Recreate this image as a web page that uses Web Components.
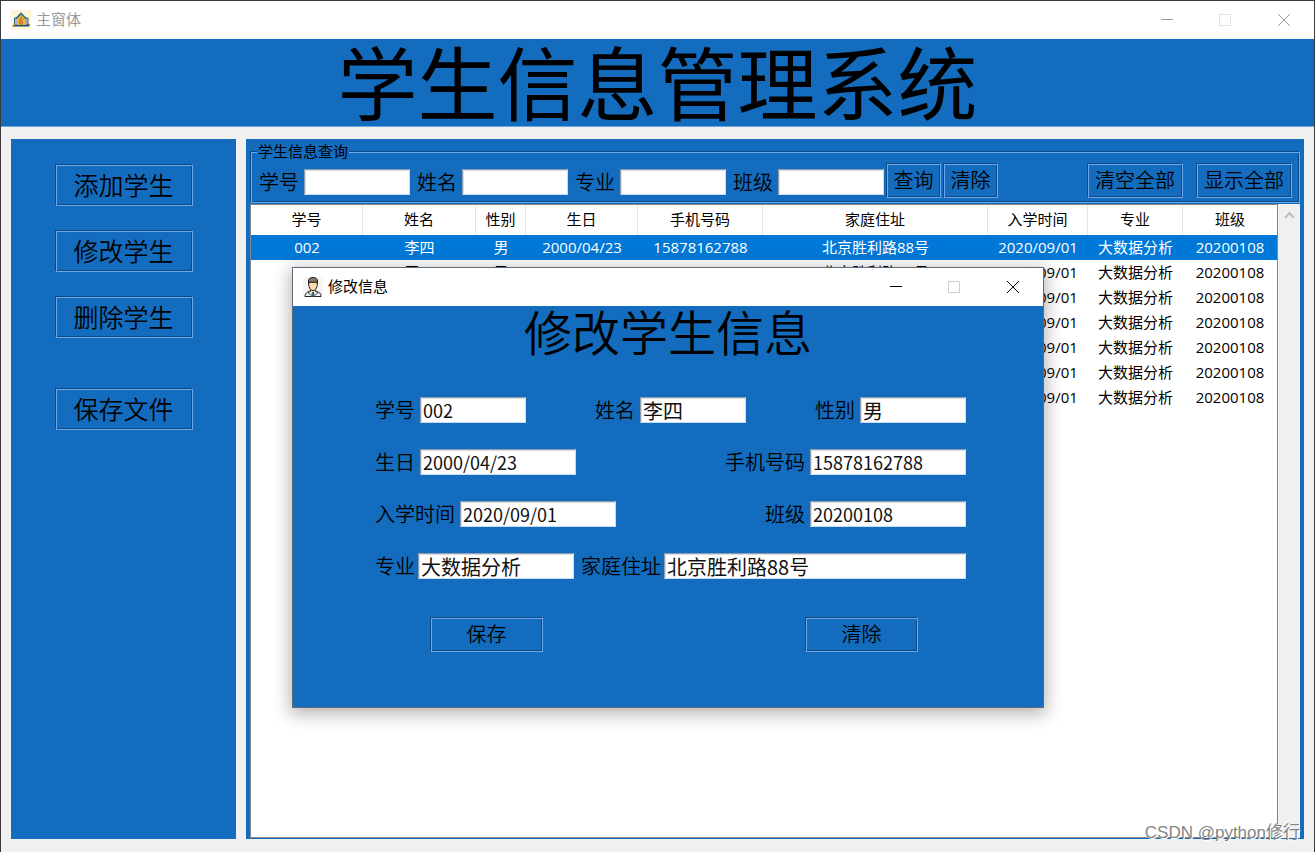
<!DOCTYPE html>
<html lang="zh-CN">
<head>
<meta charset="utf-8">
<title>主窗体</title>
<style>
  html, body { margin: 0; height: 100%; }
  body {
    --blue: #136cbe;
    --dark: #0c4a84;
    --light: #6ea6ea;
    --face: #f0f0f0;
    font-family: "Open Sans", "Noto Sans CJK SC", sans-serif;
    font-size: 15px;
    color: #000;
    background: var(--face);
  }
</style>
</head>
<body>
<main-window></main-window>

<script>
const define = (name, html, setup) => {
  const template = document.createElement('template');
  template.innerHTML = html;
  customElements.define(name, class extends HTMLElement {
    constructor() {
      super();
      this.attachShadow({ mode: 'open' }).append(template.content.cloneNode(true));
    }
    connectedCallback() { if (setup) setup(this, this.shadowRoot); }
  });
};

/* House logo of the main window */
define('house-icon', `
<style>:host { display: block; width: 20px; height: 20px; } svg { display: block; }</style>
<svg width="20" height="20" viewBox="0 0 20 20" aria-hidden="true">
  <rect width="20" height="20" fill="#fff6d8"/>
  <path d="M3.500 8h3v7h-3zM14 8h3v7h-3z" fill="#b9a9cf" stroke="#27698a"/>
  <path d="M6 15.500V7.500L10 3.500l4.500 4v8z" fill="#f4b63f"/>
  <path d="M5 8.500L10 3.500l5 5" fill="none" stroke="#1f7285" stroke-width="1.600"/>
  <path d="M8.500 15v-4h3v4M7.500 9h5M10 6v9" stroke="#b87a24" fill="none"/>
  <path d="M1 16.500l2-1.500h13l3-1-1 2.500z" fill="#1c5068"/>
  <circle cx="3" cy="14.500" r="1" fill="#f0a030"/>
</svg>`);

/* Portrait logo of the dialog */
define('person-icon', `
<style>:host { display: block; width: 20px; height: 20px; } svg { display: block; }</style>
<svg width="20" height="20" viewBox="0 0 20 20" aria-hidden="true">
  <rect width="20" height="20" fill="#f5f5f5"/>
  <path d="M2 19.500c0-4 3-4.500 6-6h4c3 1.500 6 2 6 6z" fill="#f4fafa" stroke="#222"/>
  <path d="M8 12h4v2l-2 2-2-2z" fill="#f3cfa0"/>
  <path d="M9 15h2l1 4.500H8z" fill="#4c6070"/>
  <path d="M5.500 5c0 5 1.500 8.500 4.500 8.500s4.500-3.500 4.500-8.500z" fill="#ffdcae" stroke="#222"/>
  <path d="M5.500 7V4c0-2.500 2-3.500 4.500-3.500s4.500 1 4.500 3.500v3l-1-2c-2 .500-5 .500-7 0z" fill="#8a7466" stroke="#222"/>
  <path d="M8 14l-3 2 3 2M12 14l3 2-3 2" fill="none" stroke="#333" stroke-width=".8"/>
</svg>`);

/* Title bar: icon and caption come in through slots */
define('title-bar', `
<style>
  :host { display: flex; align-items: center; height: 38px; flex: none; background: #fff; color: #000; --edge: #ccc; }
  :host([inactive]) { color: #999; --edge: #e4e4e4; }
  .caption { flex: 1; margin-left: 5px; padding-bottom: 2px; line-height: 20px; }
  ::slotted([slot=icon]) { margin-left: 10px; }
  button { width: 58px; height: 38px; padding: 0; border: 0; background: none; color: inherit; display: grid; place-items: center; }
  button:last-of-type { width: 60px; }
  button[disabled] { color: var(--edge); }
  svg { display: block; fill: none; stroke: currentColor; }
</style>
<slot name="icon"></slot>
<span class="caption"><slot></slot></span>
<button type="button" aria-label="最小化"><svg width="12" height="12"><path d="M0 5.500h12"/></svg></button>
<button type="button" aria-label="最大化" disabled><svg width="12" height="12"><path d="M.5 .5h11v11h-11z"/></svg></button>
<button type="button" aria-label="关闭"><svg width="12" height="12"><path d="M0 0l12 12M12 0l-12 12"/></svg></button>`);

define('groove-button', `
<style>
  :host { display: block; height: 35px; width: 113px; font-size: 20px; }
  :host([size=large]) { width: 138px; height: 42px; font-size: 25px; }
  :host([size=small]) { width: 55px; }
  :host([size=medium]) { width: 96px; }
  button {
    box-sizing: border-box; width: 100%; height: 100%; padding: 0; display: grid; place-items: center;
    font: inherit; font-weight: 350; line-height: 30px; white-space: nowrap; color: #000; background: var(--blue);
    border: 1px solid; border-color: var(--dark) var(--light) var(--light) var(--dark);
    box-shadow: inset 1px 1px var(--light), inset -1px -1px var(--dark);
  }
</style>
<button type="button"><slot></slot></button>`);

define('text-field', `
<style>
  :host { display: flex; align-items: center; gap: 5px; font-size: 20px; --field: 106px; }
  :host([size=wide]) { --field: 156px; }
  :host([size=fill]) { flex: 1; }
  :host([size=fill]) input { flex: 1; min-width: 0; }
  :host([tight]) { gap: 3px; }
  label { line-height: 24px; padding-top: 2px; font-weight: 350; white-space: nowrap; }
  input {
    box-sizing: border-box; width: var(--field); height: 26px; padding: 0 2px; margin: 0; outline: 0; border-radius: 0;
    font: 20px "Noto Sans CJK SC", sans-serif; color: #111; background: #fff;
    border: 1px solid; border-color: #8f9fb2 #c4dcf4 #c4dcf4 #8f9fb2; box-shadow: inset 1px 1px #dcdcdc;
  }
  :host([numeric]) input { font-size: 18px; }
</style>
<label for="box"></label><input id="box" type="text" autocomplete="off">`, (el, root) => {
  root.querySelector('label').textContent = el.getAttribute('label');
  root.querySelector('input').value = el.getAttribute('value') || '';
});

define('side-menu', `
<style>
  :host { display: flex; flex-direction: column; align-items: center; gap: 24px; box-sizing: border-box; width: 225px; flex: none; padding-top: 25px; background: var(--blue); }
  .last { margin-top: 26px; }
</style>
<groove-button size="large">添加学生</groove-button>
<groove-button size="large">修改学生</groove-button>
<groove-button size="large">删除学生</groove-button>
<groove-button size="large" class="last">保存文件</groove-button>`);

define('query-bar', `
<style>
  :host { display: block; }
  fieldset {
    margin: 0; min-width: 0; padding: 4px 7px 4px 8px; border: 1px solid;
    border-color: var(--dark) var(--light) var(--light) var(--dark);
    box-shadow: inset 1px 1px var(--light), inset -1px -1px var(--dark);
  }
  legend { height: 16px; line-height: 16px; padding: 0 1px; margin-left: -2px; background: var(--blue); }
  .row { display: flex; align-items: flex-end; }
  .fields { display: flex; gap: 7px; margin: 0 2px 3px 0; }
  .pair { display: flex; gap: 2px; }
  .all { display: flex; gap: 13px; margin-left: auto; }
</style>
<fieldset>
  <legend>学生信息查询</legend>
  <div class="row">
    <div class="fields">
      <text-field label="学号"></text-field>
      <text-field label="姓名"></text-field>
      <text-field label="专业"></text-field>
      <text-field label="班级"></text-field>
    </div>
    <div class="pair">
      <groove-button size="small">查询</groove-button>
      <groove-button size="small">清除</groove-button>
    </div>
    <div class="all">
      <groove-button size="medium">清空全部</groove-button>
      <groove-button size="medium">显示全部</groove-button>
    </div>
  </div>
</fieldset>`);

define('student-table', `
<style>
  :host { display: flex; flex: 1; }
  .view { flex: 1; min-width: 0; box-sizing: border-box; background: #fff; border: 1px solid #828790; }
  table { width: 100%; table-layout: fixed; border-collapse: separate; border-spacing: 0; }
  th, td { box-sizing: border-box; padding: 0 0 2px; text-align: center; font-weight: 400; white-space: nowrap; overflow: hidden; line-height: 20px; }
  th { height: 30px; border-right: 1px solid #e5e5e5; }
  th:last-child { border-right: 0; }
  td { height: 25px; }
  .selected td { background: #0078d7; color: #fff; }
  .bar { width: 22px; flex: none; background: var(--face); }
  svg { display: block; margin: 7px auto 0; }
</style>
<div class="view">
  <table>
    <colgroup>
      <col style="width:112px"><col style="width:113px"><col style="width:50px">
      <col style="width:112px"><col style="width:125px"><col style="width:225px">
      <col style="width:100px"><col style="width:95px"><col>
    </colgroup>
    <thead><tr><th>学号</th><th>姓名</th><th>性别</th><th>生日</th><th>手机号码</th><th>家庭住址</th><th>入学时间</th><th>专业</th><th>班级</th></tr></thead>
    <tbody></tbody>
  </table>
</div>
<div class="bar"><svg width="11" height="9" viewBox="0 0 11 9" fill="none" stroke="#bfbfbf" stroke-width="2"><path d="M1 7l4.500-5L10 7"/></svg></div>`, (el, root) => {
  const common = ['2020/09/01', '大数据分析', '20200108'];
  const blank = ['', '', '', '', '', ''];
  const rows = [
    ['002', '李四', '男', '2000/04/23', '15878162788', '北京胜利路88号', ...common],
    ['003', '王五', '男', '2000/04/23', '15878162788', '北京胜利路88号', ...common],
    ...Array.from({ length: 5 }, () => [...blank, ...common])
  ];
  const body = root.querySelector('tbody');
  rows.forEach((cells, i) => {
    const tr = body.insertRow();
    if (i === 0) tr.className = 'selected';
    cells.forEach(text => { tr.insertCell().textContent = text; });
  });
});

define('edit-dialog', `
<style>
  :host { display: block; box-sizing: border-box; width: 752px; border: 1px solid #5f6b78; background: var(--blue); box-shadow: 0 4px 16px 2px rgba(0,0,0,.3); }
  h2 { margin: 0; padding-bottom: 37px; text-align: center; font-weight: 350; font-size: 48px; line-height: 54px; }
  form { display: flex; flex-direction: column; gap: 26px; padding: 0 77px 55px 82px; }
  .row { display: flex; justify-content: space-between; }
  .address { gap: 7px; }
  .actions { padding: 12px 48px 0 55px; }
</style>
<title-bar><person-icon slot="icon"></person-icon>修改信息</title-bar>
<h2>修改学生信息</h2>
<form>
  <div class="row">
    <text-field label="学号" value="002" numeric></text-field>
    <text-field label="姓名" value="李四"></text-field>
    <text-field label="性别" value="男"></text-field>
  </div>
  <div class="row">
    <text-field label="生日" value="2000/04/23" size="wide" numeric></text-field>
    <text-field label="手机号码" value="15878162788" size="wide" numeric></text-field>
  </div>
  <div class="row">
    <text-field label="入学时间" value="2020/09/01" size="wide" numeric></text-field>
    <text-field label="班级" value="20200108" size="wide" numeric></text-field>
  </div>
  <div class="row address">
    <text-field label="专业" value="大数据分析" size="wide" tight></text-field>
    <text-field label="家庭住址" value="北京胜利路88号" size="fill" tight></text-field>
  </div>
  <div class="row actions">
    <groove-button>保存</groove-button>
    <groove-button>清除</groove-button>
  </div>
</form>`);

define('main-window', `
<style>
  :host { display: flex; flex-direction: column; position: relative; box-sizing: border-box; min-height: 100vh; border: 1px solid #3a3a3a; border-bottom: 0; background: var(--face); }
  h1 { margin: 0; text-align: center; font-weight: 400; font-size: 80px; line-height: 87px; color: #000; background: var(--blue); border-bottom: 1px solid #6fa9dc; }
  .body { flex: 1; display: flex; gap: 10px; padding: 12px 10px 13px; }
  .main { flex: 1; min-width: 0; display: flex; flex-direction: column; gap: 1px; padding: 4px 4px 1px; background: var(--blue); }
  edit-dialog { position: absolute; left: 291px; top: 266px; }
  .mark { position: absolute; right: 14px; bottom: 8px; font: 17px/22px "Liberation Sans", "Noto Sans CJK SC", sans-serif; color: #858585; text-shadow: 1px 1px #fff; white-space: nowrap; }
</style>
<title-bar inactive><house-icon slot="icon"></house-icon>主窗体</title-bar>
<h1>学生信息管理系统</h1>
<div class="body">
  <side-menu></side-menu>
  <div class="main">
    <query-bar></query-bar>
    <student-table></student-table>
  </div>
</div>
<edit-dialog role="dialog" aria-label="修改信息"></edit-dialog>
<span class="mark">CSDN @python修行</span>`);
</script>
</body>
</html>
